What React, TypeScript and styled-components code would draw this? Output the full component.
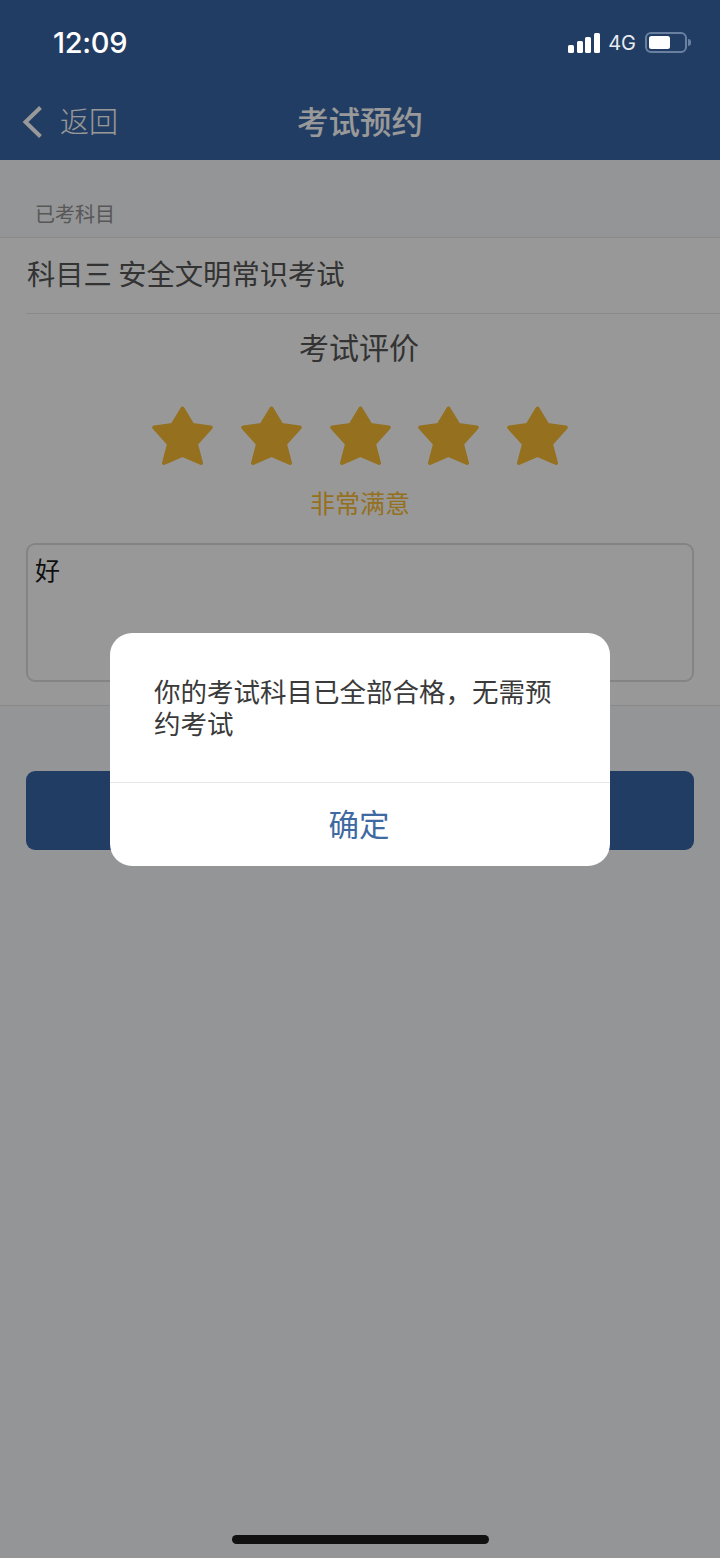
import React from "react"
import styled, { createGlobalStyle } from "styled-components"

const CJK = `"Noto Sans CJK SC", "Noto Sans", sans-serif`

const GlobalStyle = createGlobalStyle`
  html, body {
    margin: 0;
    padding: 0;
    background: #f7f8fb;
  }
  * {
    box-sizing: border-box;
  }
`

const Page = styled.div`
  position: relative;
  width: 720px;
  height: 1558px;
  overflow: hidden;
  background: #f7f8fb;
  font-family: ${CJK};
`

const Header = styled.header`
  background: #3a66a5;
  height: 160px;
`

const StatusBar = styled.div`
  position: relative;
  z-index: 2;
  height: 85px;
  display: flex;
  align-items: center;
  justify-content: space-between;
  padding: 0 33px 0 53px;
  color: #fff;
`

const Time = styled.span`
  font-family: Inter, "Liberation Sans", sans-serif;
  font-size: 29px;
  font-weight: 500;
  letter-spacing: -0.3px;
`

const StatusIcons = styled.div`
  display: flex;
  align-items: center;
`

const Signal = styled.div`
  display: flex;
  align-items: flex-end;
  gap: 2.8px;
  height: 20px;
  margin-right: 8px;
`

const SignalBar = styled.span<{ $height: number }>`
  width: 6px;
  height: ${(p) => p.$height}px;
  border-radius: 1.5px;
  background: #fff;
`

const Network = styled.span`
  font-family: Inter, "Liberation Sans", sans-serif;
  font-size: 20px;
  color: #e8ebf0;
  margin-right: 9px;
`

const Battery = styled.div`
  position: relative;
  width: 42px;
  height: 21px;
  padding: 2px;
  border: 2px solid #6a80a0;
  border-radius: 6px;
  &::after {
    content: "";
    position: absolute;
    right: -6px;
    top: 5px;
    width: 3px;
    height: 7px;
    border-radius: 0 3px 3px 0;
    background: #6a80a0;
  }
`

const BatteryFill = styled.div`
  width: 21px;
  height: 100%;
  border-radius: 2.5px;
  background: #fff;
`

const NavBar = styled.nav`
  height: 70px;
  display: grid;
  grid-template-columns: 1fr auto 1fr;
  align-items: center;
  padding: 0 22px;
`

const Back = styled.div`
  display: flex;
  align-items: center;
  gap: 17px;
  color: #fff;
  font-size: 29px;
  font-weight: 300;
  svg {
    margin-top: 4px;
  }
`

const NavTitle = styled.h1`
  margin: 0;
  font-size: 31.5px;
  font-weight: 500;
  color: #fff;
`

const SectionLabel = styled.div`
  height: 77px;
  padding: 41px 0 0 35px;
  font-size: 20px;
  line-height: 26px;
  color: #919191;
`

const Form = styled.section`
  background: #fefefe;
  height: 469px;
  border-top: 1px solid #e4e4e4;
  border-bottom: 1px solid #e4e4e4;
`

const SubjectRow = styled.div`
  margin-left: 26px;
  height: 76px;
  padding: 0 0 6px 1px;
  display: flex;
  align-items: center;
  border-bottom: 1px solid #e4e4e4;
  font-size: 28.3px;
  color: #555;
`

const RatingTitle = styled.div`
  padding: 10px 2px 0 0;
  text-align: center;
  font-size: 30px;
  line-height: 44px;
  color: #555;
`

const Stars = styled.div`
  display: flex;
  justify-content: center;
  gap: 27.6px;
  margin-top: 38px;
`

const RatingText = styled.div`
  margin-top: 18px;
  text-align: center;
  font-size: 25px;
  line-height: 36px;
  color: #f7bb34;
`

const Comment = styled.div`
  margin: 23px 26px 0;
  height: 139px;
  padding: 6px 7px;
  border: 2px solid #dcdcdc;
  border-radius: 9px;
  font-size: 25px;
  line-height: 36px;
  color: #1c1c1c;
`

const SubmitButton = styled.div`
  margin: 65px 26px 0;
  height: 79px;
  border-radius: 9px;
  background: #3a66a5;
`

const Overlay = styled.div`
  position: absolute;
  inset: 0;
  z-index: 1;
  display: flex;
  justify-content: center;
  align-items: flex-start;
  padding-top: 633px;
  background: rgba(0, 0, 0, 0.4);
`

const Dialog = styled.div`
  width: 500px;
  height: 233px;
  border-radius: 22px;
  background: #fff;
  overflow: hidden;
`

const DialogMessage = styled.div`
  height: 150px;
  padding: 42px 44px 0;
  border-bottom: 1px solid #e6e6e8;
  font-size: 26.5px;
  line-height: 32px;
  color: #3a3a3a;
`

const DialogButton = styled.div`
  height: 83px;
  display: flex;
  align-items: center;
  justify-content: center;
  padding: 0 2px 3px 0;
  font-size: 30.5px;
  color: #3f6aa1;
`

const HomeIndicator = styled.div`
  position: absolute;
  z-index: 2;
  left: 232px;
  bottom: 14px;
  width: 257px;
  height: 9px;
  border-radius: 5px;
  background: #111;
`

const Star = () => (
  <svg width="61" height="60" viewBox="0 0 61 60">
    <polygon
      points="30.5,2.5 40.5,19 58.8,21.5 44,38 49,57 30.5,49 12,57 17,38 2.2,21.5 20.5,19"
      fill="#f7bb34"
      stroke="#f7bb34"
      strokeWidth="4"
      strokeLinejoin="round"
    />
  </svg>
)

const BackArrow = () => (
  <svg width="21" height="34" viewBox="0 0 21 34">
    <path d="M18.5 2.5 L3.5 17 L18.5 31.5" fill="none" stroke="#fff" strokeWidth="4" />
  </svg>
)

export default function App() {
  return (
    <Page>
      <GlobalStyle />
      <Header>
        <StatusBar>
          <Time>12:09</Time>
          <StatusIcons>
            <Signal>
              {[8, 12, 16, 20].map((h) => (
                <SignalBar key={h} $height={h} />
              ))}
            </Signal>
            <Network>4G</Network>
            <Battery>
              <BatteryFill />
            </Battery>
          </StatusIcons>
        </StatusBar>
        <NavBar>
          <Back>
            <BackArrow />
            返回
          </Back>
          <NavTitle>考试预约</NavTitle>
        </NavBar>
      </Header>
      <SectionLabel>已考科目</SectionLabel>
      <Form>
        <SubjectRow>科目三 安全文明常识考试</SubjectRow>
        <RatingTitle>考试评价</RatingTitle>
        <Stars>
          {[0, 1, 2, 3, 4].map((i) => (
            <Star key={i} />
          ))}
        </Stars>
        <RatingText>非常满意</RatingText>
        <Comment>好</Comment>
      </Form>
      <SubmitButton />
      <Overlay>
        <Dialog>
          <DialogMessage>你的考试科目已全部合格，无需预约考试</DialogMessage>
          <DialogButton>确定</DialogButton>
        </Dialog>
      </Overlay>
      <HomeIndicator />
    </Page>
  )
}
